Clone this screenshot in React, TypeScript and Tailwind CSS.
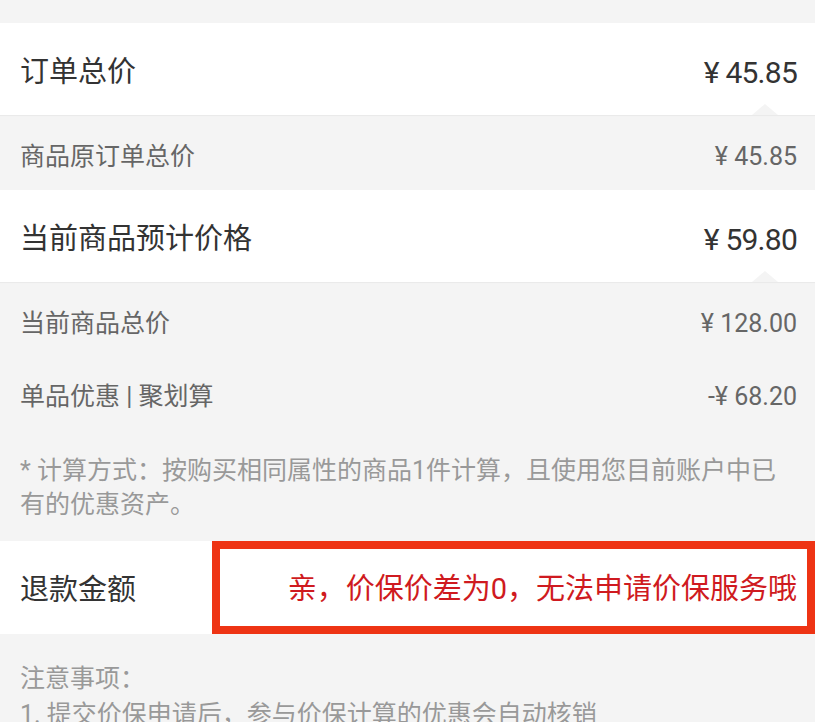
const font = { fontFamily: "Roboto, 'Noto Sans CJK SC', sans-serif" };

function Arrow() {
  return (
    <span className="absolute bottom-0 right-[37px] h-0 w-0 border-x-[13px] border-b-[11px] border-x-transparent border-b-[#f4f4f4]" />
  );
}

function MainRow({ label, value }: { label: string; value: string }) {
  return (
    <div className="relative flex h-[92px] items-center justify-between bg-white px-5 pr-[18px] pt-[7px] text-[#333] shadow-[0_1px_1px_rgba(0,0,0,0.04)]">
      <span className="text-[29px]">{label}</span>
      <span className="text-[30px] tracking-tight">{value}</span>
      <Arrow />
    </div>
  );
}

function SubRow({ label, value, h }: { label: string; value: string; h: string }) {
  return (
    <div className={`flex items-center justify-between px-5 pr-[18px] text-[#666] ${h}`}>
      <span className="text-[25px]">{label}</span>
      <span className="text-[25px]">{value}</span>
    </div>
  );
}

export default function App() {
  return (
    <div className="h-[722px] w-[815px] overflow-hidden bg-[#f4f4f4]" style={font}>
      <div className="h-[23px]" />
      <MainRow label="订单总价" value="¥ 45.85" />
      <div className="pt-[9px]">
        <SubRow label="商品原订单总价" value="¥ 45.85" h="h-[66px]" />
      </div>
      <MainRow label="当前商品预计价格" value="¥ 59.80" />
      <div className="pt-[5px]">
        <SubRow label="当前商品总价" value="¥ 128.00" h="h-[73px]" />
        <SubRow label="单品优惠 | 聚划算" value="-¥ 68.20" h="h-[73px]" />
        <p className="px-5 pb-[19px] pt-[21px] text-[25px] leading-[34px] text-[#999]">
          * 计算方式：按购买相同属性的商品1件计算，且使用您目前账户中已有的优惠资产。
        </p>
      </div>
      <div className="flex h-[93px] bg-white">
        <div className="flex w-[212px] items-center px-5 pt-[6px] text-[29px] text-[#333]">退款金额</div>
        <div className="flex flex-1 items-center justify-end border-[8px] border-[#ee3414] pr-[10px] pt-[4px] text-[29px] text-[#cf1a20]">
          亲，价保价差为0，无法申请价保服务哦
        </div>
      </div>
      <div className="px-5 pt-[27px] text-[25px] leading-[36px] text-[#999]">
        <p>注意事项：</p>
        <p>1. 提交价保申请后，参与价保计算的优惠会自动核销</p>
      </div>
    </div>
  );
}
